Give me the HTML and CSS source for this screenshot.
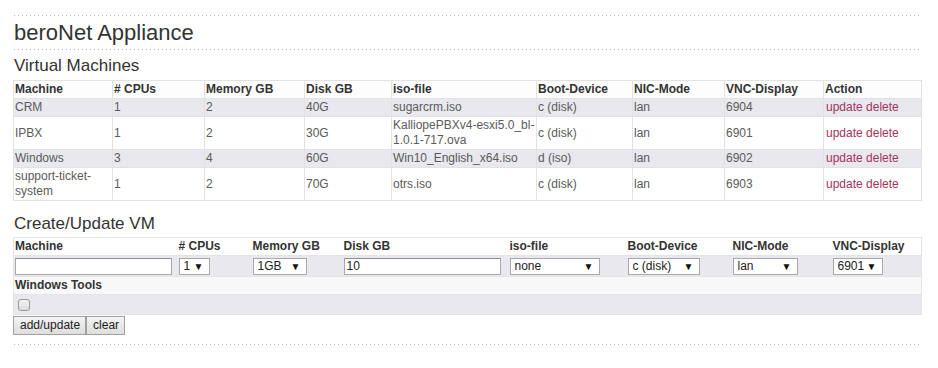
FILE: index.html
```html
<!DOCTYPE html>
<html>
<head>
<meta charset="utf-8">
<title>beroNet Appliance</title>
<link rel="stylesheet" href="styles.css">
</head>
<body>
<div class="page">
  <div class="dots"></div>
  <h1 class="title">beroNet Appliance</h1>
  <div class="dots"></div>
  <h2 class="section">Virtual Machines</h2>
  <table class="vm-table">
    <colgroup>
      <col class="c-machine"><col class="c-cpus"><col class="c-mem"><col class="c-disk"><col class="c-iso"><col class="c-boot"><col class="c-nic"><col class="c-vnc"><col class="c-action">
    </colgroup>
    <thead>
      <tr><th>Machine</th><th># CPUs</th><th>Memory GB</th><th>Disk GB</th><th>iso-file</th><th>Boot-Device</th><th>NIC-Mode</th><th>VNC-Display</th><th>Action</th></tr>
    </thead>
    <tbody>
      <tr class="odd"><td>CRM</td><td>1</td><td>2</td><td>40G</td><td>sugarcrm.iso</td><td>c (disk)</td><td>lan</td><td>6904</td><td class="act"><a href="#">update</a> <a href="#">delete</a></td></tr>
      <tr><td>IPBX</td><td>1</td><td>2</td><td>30G</td><td>KalliopePBXv4-esxi5.0_bl-1.0.1-717.ova</td><td>c (disk)</td><td>lan</td><td>6901</td><td class="act"><a href="#">update</a> <a href="#">delete</a></td></tr>
      <tr class="odd"><td>Windows</td><td>3</td><td>4</td><td>60G</td><td>Win10_English_x64.iso</td><td>d (iso)</td><td>lan</td><td>6902</td><td class="act"><a href="#">update</a> <a href="#">delete</a></td></tr>
      <tr><td>support-ticket-system</td><td>1</td><td>2</td><td>70G</td><td>otrs.iso</td><td>c (disk)</td><td>lan</td><td>6903</td><td class="act"><a href="#">update</a> <a href="#">delete</a></td></tr>
    </tbody>
  </table>

  <h2 class="section section-create">Create/Update VM</h2>
  <form class="vm-form" onsubmit="return false">
    <table class="form-table">
      <colgroup>
        <col class="f-machine"><col class="f-cpus"><col class="f-mem"><col class="f-disk"><col class="f-iso"><col class="f-boot"><col class="f-nic"><col class="f-vnc">
      </colgroup>
      <tr class="head">
        <th>Machine</th><th># CPUs</th><th>Memory GB</th><th>Disk GB</th><th>iso-file</th><th>Boot-Device</th><th>NIC-Mode</th><th>VNC-Display</th>
      </tr>
      <tr class="odd inputs">
        <td><input class="text w-machine" type="text" value=""></td>
        <td><span class="sel w-cpus"><select><option>1</option><option>2</option><option>3</option><option>4</option></select></span></td>
        <td><span class="sel w-mem"><select><option>1GB</option><option>2GB</option><option>4GB</option></select></span></td>
        <td><input class="text w-disk" type="text" value="10"></td>
        <td><span class="sel w-iso"><select><option>none</option><option>sugarcrm.iso</option></select></span></td>
        <td><span class="sel w-boot"><select><option>c (disk)</option><option>d (iso)</option></select></span></td>
        <td><span class="sel w-nic"><select><option>lan</option></select></span></td>
        <td><span class="sel w-vnc"><select><option>6901</option></select></span></td>
      </tr>
      <tr class="tools">
        <th colspan="8">Windows Tools</th>
      </tr>
      <tr class="odd checkrow">
        <td colspan="8"><input class="check" type="checkbox"></td>
      </tr>
    </table>
    <div class="buttons">
      <button class="btn" type="button">add/update</button><button class="btn" type="button">clear</button>
    </div>
  </form>
  <div class="dots dots-bottom"></div>
</div>
</body>
</html>
```

FILE: styles.css
```css
html, body {
  margin: 0;
  padding: 0;
  background: #ffffff;
}

body {
  font-family: "Liberation Sans", Arial, sans-serif;
  color: #333333;
}

.page {
  padding: 15px 17px 0 13px;
}

.dots {
  height: 1px;
  margin-left: 1px;
  background-image: linear-gradient(to right, #bdbdbd 0, #bdbdbd 1px, transparent 1px);
  background-size: 4px 1px;
  background-repeat: repeat-x;
}

.title {
  margin: 5px 0 4px 1px;
  font-size: 22px;
  line-height: 24px;
  font-weight: normal;
  color: #333333;
}

.section {
  margin: 6px 0 4px 1px;
  font-size: 17px;
  line-height: 20px;
  font-weight: normal;
  color: #333333;
}

.section-create {
  margin-top: 13px;
  margin-bottom: 3px;
}

table {
  border-collapse: collapse;
  width: 908px;
  table-layout: fixed;
  font-size: 12px;
}

.vm-table {
  border: 1px solid #e2e2e2;
}

.vm-table th,
.vm-table td {
  border: 1px solid #e2e2e2;
  padding: 1px 1px;
  line-height: 15px;
  text-align: left;
  vertical-align: middle;
}

.vm-table td.act {
  padding-left: 2px;
}

th {
  font-weight: bold;
  color: #333333;
  background: #fdfdfd;
}

td {
  color: #5a5a5a;
}

tr.odd td {
  background: #e8e8ee;
}

.c-machine { width: 99px; }
.c-cpus { width: 92px; }
.c-mem { width: 100px; }
.c-disk { width: 87px; }
.c-iso { width: 145px; }
.c-boot { width: 96px; }
.c-nic { width: 92px; }
.c-vnc { width: 99px; }
.c-action { width: 98px; }

.vm-table a {
  color: #a5325e;
  text-decoration: none;
}

/* form table */
.vm-form {
  margin: 0;
}

.form-table {
  border: 1px solid #e4e4e4;
}

.form-table th,
.form-table td {
  border-top: 1px solid #e4e4e4;
  border-bottom: 1px solid #e4e4e4;
  padding: 1px 1px;
  line-height: 15px;
  text-align: left;
  vertical-align: middle;
}

.form-table tr.head th {
  background: #ffffff;
}

.form-table tr.inputs td {
  padding: 1px 1px;
  height: 18px;
}

.form-table tr.tools th {
  background: #f8f8f8;
  padding: 1px 1px;
}

.form-table tr.checkrow td {
  height: 17px;
  padding: 1px 1px;
}

.f-machine { width: 164px; }
.f-cpus { width: 74px; }
.f-mem { width: 91px; }
.f-disk { width: 166px; }
.f-iso { width: 118px; }
.f-boot { width: 105px; }
.f-nic { width: 100px; }
.f-vnc { width: 90px; }

.text {
  display: block;
  box-sizing: border-box;
  height: 17px;
  margin: 0;
  padding: 0 2px;
  border: 1px solid #a9a9a9;
  border-top-color: #8f8f8f;
  background: #ffffff;
  font-family: "Liberation Sans", Arial, sans-serif;
  font-size: 12px;
  color: #222222;
  outline: none;
}

.w-machine { width: 157px; }
.w-disk { width: 157px; }

.sel {
  position: relative;
  display: block;
  box-sizing: border-box;
  height: 17px;
}

.sel select {
  -webkit-appearance: none;
  appearance: none;
  display: block;
  box-sizing: border-box;
  width: 100%;
  height: 17px;
  margin: 0;
  padding: 0 14px 0 4px;
  border: 1px solid #a9a9a9;
  border-radius: 0;
  background: #ffffff;
  font-family: "Liberation Sans", Arial, sans-serif;
  font-size: 12px;
  line-height: 15px;
  color: #222222;
  outline: none;
}

.sel::after {
  content: "\25BC";
  position: absolute;
  right: 6px;
  top: 3px;
  font-size: 10px;
  line-height: 11px;
  color: #111111;
  pointer-events: none;
}

.w-cpus { width: 31px; }
.w-mem { width: 54px; }
.w-iso { width: 90px; }
.w-boot { width: 72px; }
.w-nic { width: 65px; }
.w-vnc { width: 50px; }

.check {
  -webkit-appearance: none;
  appearance: none;
  display: block;
  box-sizing: border-box;
  width: 12px;
  height: 12px;
  margin: 2px 0 2px 3px;
  border: 1px solid #9a9a9a;
  border-radius: 3px;
  background: linear-gradient(#f4f4f4, #dcdcdc);
}

.buttons {
  display: flex;
  padding-top: 1px;
}

.btn {
  box-sizing: border-box;
  height: 19px;
  margin: 0;
  padding: 0 5px 0 6px;
  border: 1px solid #a0a0a0;
  border-radius: 0;
  background: linear-gradient(#f4f4f4, #dedede);
  font-family: "Liberation Sans", Arial, sans-serif;
  font-size: 12px;
  line-height: 17px;
  color: #222222;
}

.dots-bottom {
  margin-top: 9px;
}
```
